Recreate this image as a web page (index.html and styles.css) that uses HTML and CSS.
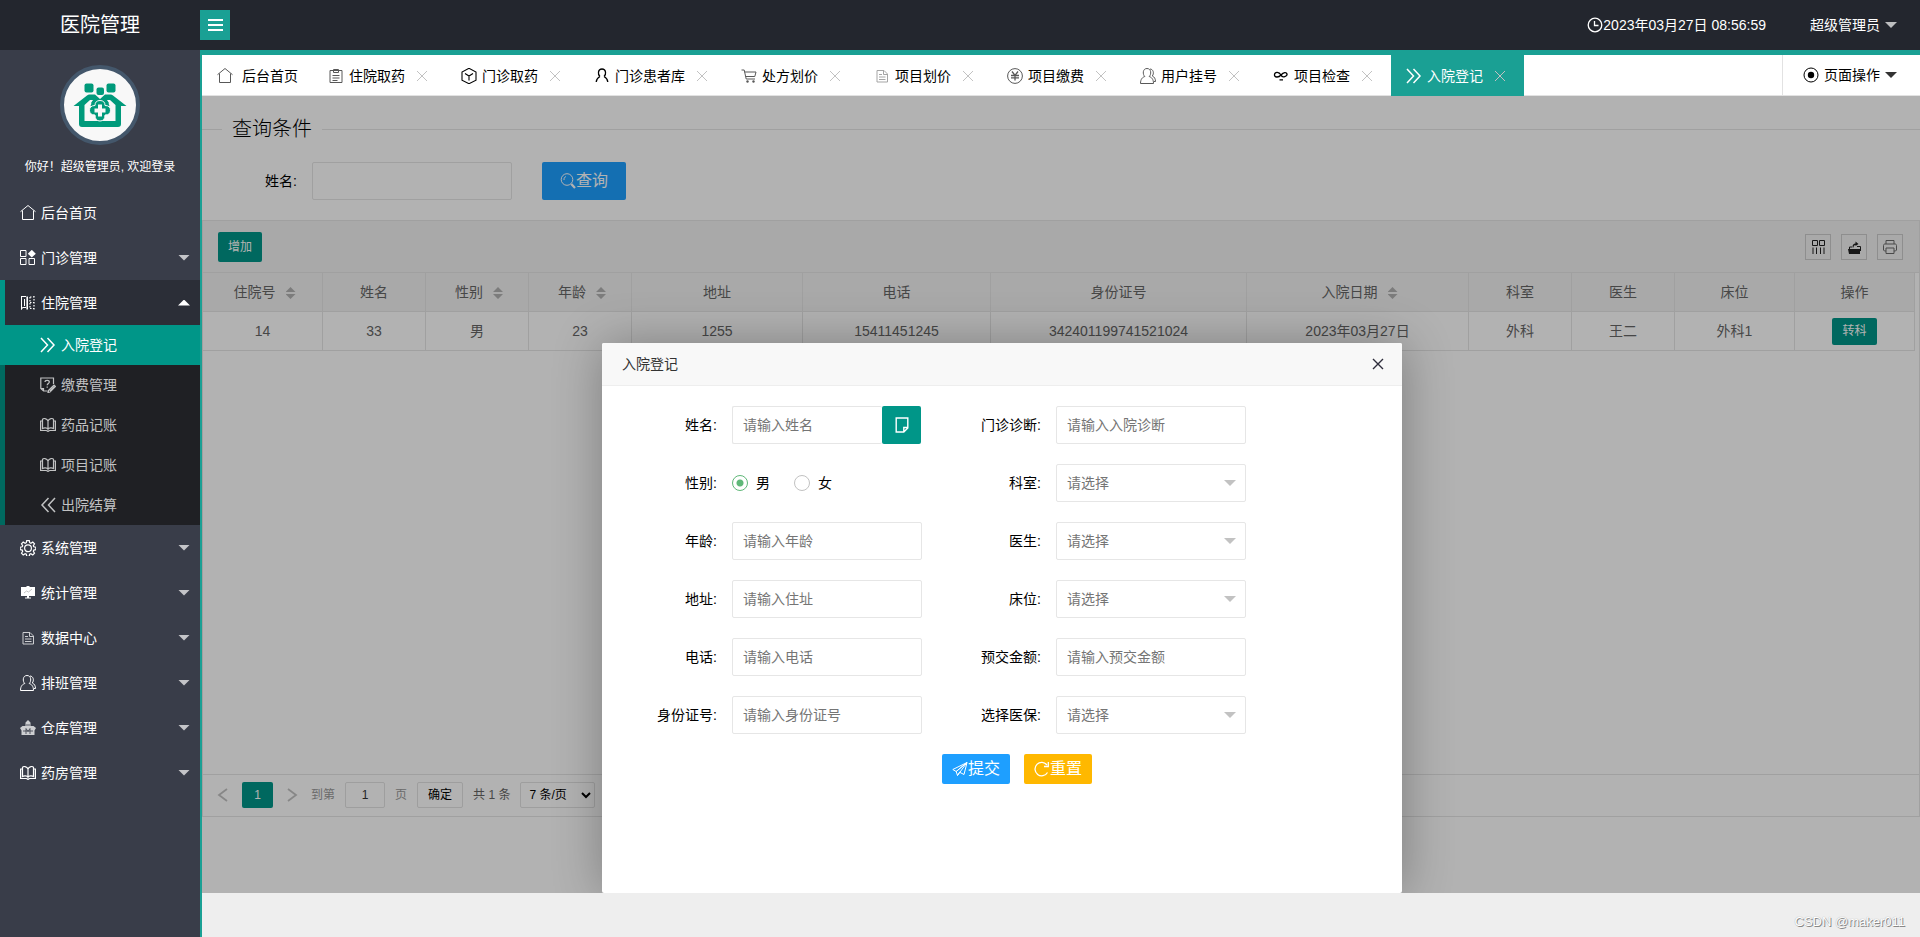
FILE: index.html
```html
<!DOCTYPE html>
<html lang="zh-CN">
<head>
<meta charset="utf-8">
<title>医院管理</title>
<link rel="stylesheet" href="styles.css">
</head>
<body>
<svg class="sprite" aria-hidden="true">
  <symbol id="i-home" viewBox="0 0 16 16"><path d="M.5 6.700 8 .5l7.500 6.200M2.500 5.500v9h11v-9"/></symbol>
  <symbol id="i-apps" viewBox="0 0 16 16"><path d="M.5.500h5.500v6H.5zM.5 8.500h5.500v6H.5zM9 8.500h5.500v6H9z"/><path class="solid" d="m11.800-.2 4 3.900-4 3.900-4-3.900z"/></symbol>
  <symbol id="i-building" viewBox="0 0 16 16"><path d="M1.500 1v13.500M1.500 1.500H6M1.500 14.500l1-2H6M4.500 4v7"/><path stroke-width="1.600" d="M7.200 1.500v13"/><path stroke-width="1.200" stroke-dasharray="1.500 1.500" d="M10 2v12M14 1v14M10 2h4M10 7.500h4M10 13.500h4"/></symbol>
  <symbol id="i-right" viewBox="0 0 16 16"><path stroke-width="1.500" d="m1 1 6.500 7L1 15M7.500 1 14 8l-6.500 7"/></symbol>
  <symbol id="i-left" viewBox="0 0 16 16"><path stroke-width="1.500" d="M8.500 1 2 8l6.500 7M15 1 8.500 8l6.500 7"/></symbol>
  <symbol id="i-quiz" viewBox="0 0 16 16"><path stroke-width="1.200" d="M13.500 7V1H.8v10.500L3.500 14h4M.8 11.500h2.700V14M5 5c0-2.200 4.300-2.200 4.300 0 0 1.500-2.100 1.500-2.100 3.300M7.200 9.600v1.200M8.500 13.500l5.500-5.500 1.500 1.500-5.500 5.500-2 .5zM10 14l4.500-4.500"/></symbol>
  <symbol id="i-book" viewBox="0 0 16 16"><path stroke-width="1.200" d="M8 4C7 1 3 1 2.500 2.500v9c1.500-1 4.500-1 5.500.7 1-1.700 4-1.700 5.500-.7v-9C13 1 9 1 8 4zv8M2.500 4H.6v9.500h5.700c.5 0 .8.800 1.700.8s1.200-.8 1.700-.8h5.700V4h-1.900"/></symbol>
  <symbol id="i-gear" viewBox="0 0 16 16"><path stroke-width="1.200" d="M6.700.6h2.600l.4 2.100 1.200.6 1.900-1.200 1.700 1.700-1.200 1.900.5 1.100 2 .4v2.400l-2 .5-.5 1.100 1.200 2-1.700 1.700-1.900-1.200-1.200.5-.4 2.200H6.700l-.4-2.200-1.200-.5-1.900 1.200-1.700-1.700 1.200-2-.5-1.100-2-.5V7.200l2-.4.5-1.100-1.200-1.900 1.700-1.700 1.900 1.200 1.200-.6z"/><circle cx="8" cy="8.300" r="3.400" stroke-width="1.200"/></symbol>
  <symbol id="i-board" viewBox="0 0 16 16"><path class="solid" d="M6.500 1h3v1H15v9H9v1.500h2v1H5v-1h2V11H1V2h5.500z"/><path stroke="#aaa" stroke-width=".7" d="m4 8 2.500-2 2 1L12 4"/></symbol>
  <symbol id="i-file" viewBox="0 0 16 16"><path d="M3 2.500h7l3.500 3.500v8H3zM9.500 2.500v4h4M5 6.500h3M5 9h6.500M5 11.500h6.500"/></symbol>
  <symbol id="i-users" viewBox="0 0 16 16"><path d="M4.800 8.500C2.500 6.500 2.500.5 7 .5s4.500 6 2.200 8c2.200.7 4.300 2.500 4.300 7H.5c0-4.500 2.100-6.300 4.300-7zM10 1c3.500.2 4.300 4.500 2.300 7 2.200 1 3.200 2.800 3.200 5.500h-1.500"/></symbol>
  <symbol id="i-depot" viewBox="0 0 16 16"><path class="solid" opacity=".75" d="M8 0 10.500 2.500V6h3L16 8l-1.500 2.500V15h-13v-4.500L0 8l2.500-2h3V2.500z"/><path stroke="#393d49" stroke-width=".8" d="M3 11h10M6 14V8.500l2 3 2-3V14M6 5h4"/></symbol>
  <symbol id="i-note" viewBox="0 0 16 16"><path d="M2 2.500h12v12H2zM5.500 4.500v-3h5v3zM4.500 7.500h7M4.500 10h7M4.500 12.500h5"/></symbol>
  <symbol id="i-cube" viewBox="0 0 16 16"><path stroke-width="1.100" d="M8 .3 15 4v8.200L8 15.700 1 12.200V4zM4 5.500 8 8l4-2.500M8 8v4.500"/></symbol>
  <symbol id="i-user" viewBox="0 0 16 16"><path d="M6 8.500C3.500 6.500 3.800 1 8 1s4.500 5.500 2 7.500M6 8.500C4 9.500 2.500 11 2.200 14M10 8.500c2 1 3.500 2.500 3.800 5.500" stroke-width="1.300"/></symbol>
  <symbol id="i-cart" viewBox="0 0 16 16"><path d="M.5 2h2.700l2 9H14M3.600 4H15l-1.200 4.500H4.600"/><circle class="solid" cx="6.500" cy="13.500" r="1.200"/><circle class="solid" cx="12.500" cy="13.500" r="1.200"/></symbol>
  <symbol id="i-yen" viewBox="0 0 16 16"><circle cx="8" cy="8" r="7.400"/><path stroke-width="1.300" d="m5 3.500 3 4 3-4M8 7.500v5M4 7.500h8M4 9.800h8"/></symbol>
  <symbol id="i-infinity" viewBox="0 0 16 16"><path stroke-width="1.300" d="M8 7C6 3.500 2 3.500 1.500 6.500S5.500 10 8 7s5.500-3 6-1-4.500 4.500-6 1M6.500 11.800h3.500"/></symbol>
  <symbol id="i-close" viewBox="0 0 16 16"><path d="m3 3 10 10M13 3 3 13"/></symbol>
  <symbol id="i-clock" viewBox="0 0 16 16"><circle cx="8" cy="8" r="6.800" stroke-width="1.300"/><path stroke-width="1.300" d="M7.500 4v4.500h4"/></symbol>
  <symbol id="i-dot" viewBox="0 0 16 16"><circle cx="8" cy="8" r="7"/><circle class="solid" cx="8" cy="8" r="3.200"/></symbol>
  <symbol id="i-search" viewBox="0 0 16 16"><circle cx="7" cy="6.500" r="5.800"/><path stroke-width="2.200" d="m11.300 11 3.700 4"/><path d="M4 7c-.2-2 .8-3 2-3.500"/></symbol>
  <symbol id="i-page" viewBox="0 0 16 16"><path stroke-width="1.400" d="M2.200 1h11.600v10L9.800 15H2.200zM13.800 10.500h-4V15"/></symbol>
  <symbol id="i-send" viewBox="0 0 16 16"><path d="M15 1.500.8 8.500l3.400 2zM15 1.500 4.200 10.500l1.300 4 9.500-13-3 12-4.500-2.300M5.500 14.500l2-3.300"/></symbol>
  <symbol id="i-refresh" viewBox="0 0 16 16"><path stroke-width="1.300" d="M13.500 11.500A6.700 6.700 0 1 1 13 4"/><path stroke-width="1.300" d="M14.300 1v4.500H10"/></symbol>
  <symbol id="i-cols" viewBox="0 0 16 16"><path d="M2.500 1.500h5v5h-5zM9.500 1.500h5v5h-5zM3 8.500v6.500M6.500 8.500v6.500M10.500 8.500v6.500M14 8.500v6.500"/></symbol>
  <symbol id="i-export" viewBox="0 0 16 16"><path class="solid" d="M2 10h12v5H3zM6.500 8.500c0-3 1-4 3-4V2.500L12.500 5 9.500 7V6c-1.500 0-1.800 1-2 2.500z"/><path d="M11 7.500h3.500V12M3.500 10V8H6"/></symbol>
  <symbol id="i-print" viewBox="0 0 16 16"><path d="M4 5V1.500h8V5M4 12H2.500L1.500 11V6.500c0-1 .5-1.500 1.500-1.500h10c1 0 1.500.5 1.500 1.500V11l-1 1H12M4 9h8v5.500H4z"/></symbol>
  <symbol id="i-prev" viewBox="0 0 16 16"><path stroke-width="1.800" d="M12 2 4 8l8 6"/></symbol>
  <symbol id="i-next" viewBox="0 0 16 16"><path stroke-width="1.800" d="m4 2 8 6-8 6"/></symbol>
</svg>

<div class="app">
  <header class="header">
    <h1 class="logo">医院管理</h1>
    <button class="toggle" type="button" aria-label="收起菜单"><span></span><span></span><span></span></button>
    <div class="clock"><svg class="icon"><use href="#i-clock"/></svg>2023年03月27日 08:56:59</div>
    <button class="account" type="button">超级管理员<i class="caret"></i></button>
  </header>

  <div class="body">
    <aside class="side">
      <div class="profile">
        <svg class="avatar" viewBox="0 0 80 80" role="img" aria-label="头像">
          <circle cx="40" cy="40" r="38" fill="#f8f8f8" stroke="#44576b" stroke-width="4"/>
          <g fill="#009a7b">
            <rect x="24.500" y="18.500" width="9" height="9" rx="2"/>
            <rect x="46.500" y="18.500" width="9" height="9" rx="2"/>
            <rect x="36.500" y="22.500" width="7.500" height="7.500" rx="2"/>
            <path d="M13.500 41 27 30.500q1-1 2.500-1H35l5 4.500 5-4.500h5.500q1.500 0 2.500 1L66.500 41H61v18q0 3-3 3H22q-3 0-3-3V41z"/>
          </g>
          <path fill="#f8f8f8" d="M24.500 40 30 35h3.500l-3 5.500L40 50l9.500-9.500-3-5.500H50l5.500 5V56h-31z"/>
          <path fill="#009a7b" d="M31 38l4-6 5 4 5-4 4 6-9 10z"/>
          <path fill="#009a7b" stroke="#f8f8f8" stroke-width="1" d="M35 40.500q0-5 5-5t5 5q5.500 0 5.500 4.800T45 50q0 6-5 6t-5-6q-5.500 0-5.500-4.700t5.500-4.800z"/>
          <path fill="#f8f8f8" d="M38 39.500h4v4h3.500v4H42v4h-4v-4h-3.500v-4H38z"/>
        </svg>
        <p>你好！超级管理员, 欢迎登录</p>
      </div>
      <nav class="nav">
        <a href="#"><svg class="icon"><use href="#i-home"/></svg>后台首页</a>
        <a href="#"><svg class="icon"><use href="#i-apps"/></svg>门诊管理<i class="caret"></i></a>
        <div class="group">
          <a class="open" href="#"><svg class="icon"><use href="#i-building"/></svg>住院管理<i class="caret up"></i></a>
          <div class="sub">
            <a class="current" href="#"><svg class="icon"><use href="#i-right"/></svg>入院登记</a>
            <a href="#"><svg class="icon"><use href="#i-quiz"/></svg>缴费管理</a>
            <a href="#"><svg class="icon"><use href="#i-book"/></svg>药品记账</a>
            <a href="#"><svg class="icon"><use href="#i-book"/></svg>项目记账</a>
            <a href="#"><svg class="icon"><use href="#i-left"/></svg>出院结算</a>
          </div>
        </div>
        <a href="#"><svg class="icon"><use href="#i-gear"/></svg>系统管理<i class="caret"></i></a>
        <a href="#"><svg class="icon"><use href="#i-board"/></svg>统计管理<i class="caret"></i></a>
        <a href="#"><svg class="icon thin"><use href="#i-file"/></svg>数据中心<i class="caret"></i></a>
        <a href="#"><svg class="icon"><use href="#i-users"/></svg>排班管理<i class="caret"></i></a>
        <a href="#"><svg class="icon"><use href="#i-depot"/></svg>仓库管理<i class="caret"></i></a>
        <a href="#"><svg class="icon"><use href="#i-book"/></svg>药房管理<i class="caret"></i></a>
      </nav>
    </aside>

    <main class="main">
      <div class="tabs">
        <a class="tab home" href="#"><svg class="icon soft"><use href="#i-home"/></svg>后台首页</a>
        <a class="tab" href="#"><svg class="icon soft"><use href="#i-note"/></svg>住院取药<svg class="x"><use href="#i-close"/></svg></a>
        <a class="tab" href="#"><svg class="icon"><use href="#i-cube"/></svg>门诊取药<svg class="x"><use href="#i-close"/></svg></a>
        <a class="tab" href="#"><svg class="icon"><use href="#i-user"/></svg>门诊患者库<svg class="x"><use href="#i-close"/></svg></a>
        <a class="tab" href="#"><svg class="icon soft"><use href="#i-cart"/></svg>处方划价<svg class="x"><use href="#i-close"/></svg></a>
        <a class="tab" href="#"><svg class="icon faint"><use href="#i-file"/></svg>项目划价<svg class="x"><use href="#i-close"/></svg></a>
        <a class="tab" href="#"><svg class="icon soft"><use href="#i-yen"/></svg>项目缴费<svg class="x"><use href="#i-close"/></svg></a>
        <a class="tab" href="#"><svg class="icon soft"><use href="#i-users"/></svg>用户挂号<svg class="x"><use href="#i-close"/></svg></a>
        <a class="tab" href="#"><svg class="icon"><use href="#i-infinity"/></svg>项目检查<svg class="x"><use href="#i-close"/></svg></a>
        <a class="tab active" href="#"><svg class="icon"><use href="#i-right"/></svg>入院登记<svg class="x"><use href="#i-close"/></svg></a>
        <button class="ops" type="button"><svg class="icon"><use href="#i-dot"/></svg>页面操作<i class="caret"></i></button>
      </div>

      <section class="frame">
        <fieldset class="query">
          <legend>查询条件</legend>
          <form class="query-row">
            <label for="q-name">姓名:</label>
            <input class="field" id="q-name" type="text">
            <button class="btn blue large" type="button"><svg class="icon"><use href="#i-search"/></svg>查询</button>
          </form>
        </fieldset>

        <div class="grid">
          <div class="toolbar">
            <button class="btn small" type="button">增加</button>
            <div class="tools">
              <button type="button" aria-label="筛选列"><svg class="icon"><use href="#i-cols"/></svg></button>
              <button type="button" aria-label="导出"><svg class="icon"><use href="#i-export"/></svg></button>
              <button type="button" aria-label="打印"><svg class="icon soft"><use href="#i-print"/></svg></button>
            </div>
          </div>
          <div class="grid-body">
            <table>
              <colgroup>
                <col class="w120"><col class="w103"><col class="w103"><col class="w103"><col class="w171"><col class="w188"><col class="w256"><col class="w222"><col class="w103"><col class="w103"><col class="w120"><col class="w120">
              </colgroup>
              <thead>
                <tr><th class="sortable">住院号<i class="sort"></i></th><th>姓名</th><th class="sortable">性别<i class="sort"></i></th><th class="sortable">年龄<i class="sort"></i></th><th>地址</th><th>电话</th><th>身份证号</th><th class="sortable">入院日期<i class="sort"></i></th><th>科室</th><th>医生</th><th>床位</th><th>操作</th></tr>
              </thead>
              <tbody>
                <tr><td>14</td><td>33</td><td>男</td><td>23</td><td>1255</td><td>15411451245</td><td>342401199741521024</td><td>2023年03月27日</td><td>外科</td><td>王二</td><td>外科1</td><td><button class="btn mini" type="button">转科</button></td></tr>
              </tbody>
            </table>
          </div>
          <div class="pager">
            <a class="arrow" href="#" aria-label="上一页"><svg class="icon"><use href="#i-prev"/></svg></a>
            <span class="page">1</span>
            <a class="arrow" href="#" aria-label="下一页"><svg class="icon"><use href="#i-next"/></svg></a>
            <label for="p-no">到第</label>
            <input id="p-no" type="text" value="1">
            <span class="unit">页</span>
            <button type="button">确定</button>
            <span class="total">共 1 条</span>
            <select aria-label="每页条数"><option>7 条/页</option></select>
          </div>
        </div>

        <div class="mask"></div>
        <div class="dialog" role="dialog" aria-labelledby="dlg-title">
          <div class="dialog-head">
            <h2 id="dlg-title">入院登记</h2>
            <button type="button" aria-label="关闭"><svg class="icon"><use href="#i-close"/></svg></button>
          </div>
          <form class="form">
            <label for="f-name">姓名:</label>
            <div class="combo"><input class="field" id="f-name" type="text" placeholder="请输入姓名"><button class="pick" type="button" aria-label="选择患者"><svg class="icon"><use href="#i-page"/></svg></button></div>
            <label for="f-diag">门诊诊断:</label>
            <input class="field" id="f-diag" type="text" placeholder="请输入入院诊断">

            <span class="label" id="sex-label">性别:</span>
            <div class="radios" role="radiogroup" aria-labelledby="sex-label">
              <label><input type="radio" name="sex" checked>男</label>
              <label><input type="radio" name="sex">女</label>
            </div>
            <label for="f-dept">科室:</label>
            <div class="pulldown"><select class="field" id="f-dept"><option>请选择</option></select></div>

            <label for="f-age">年龄:</label>
            <input class="field" id="f-age" type="text" placeholder="请输入年龄">
            <label for="f-doc">医生:</label>
            <div class="pulldown"><select class="field" id="f-doc"><option>请选择</option></select></div>

            <label for="f-addr">地址:</label>
            <input class="field" id="f-addr" type="text" placeholder="请输入住址">
            <label for="f-bed">床位:</label>
            <div class="pulldown"><select class="field" id="f-bed"><option>请选择</option></select></div>

            <label for="f-tel">电话:</label>
            <input class="field" id="f-tel" type="text" placeholder="请输入电话">
            <label for="f-pay">预交金额:</label>
            <input class="field" id="f-pay" type="text" placeholder="请输入预交金额">

            <label for="f-id">身份证号:</label>
            <input class="field" id="f-id" type="text" placeholder="请输入身份证号">
            <label for="f-ins">选择医保:</label>
            <div class="pulldown"><select class="field" id="f-ins"><option>请选择</option></select></div>

            <div class="actions">
              <button class="btn blue" type="button"><svg class="icon"><use href="#i-send"/></svg>提交</button>
              <button class="btn amber" type="button"><svg class="icon"><use href="#i-refresh"/></svg>重置</button>
            </div>
          </form>
        </div>
      </section>

      <footer class="footer">CSDN @maker011</footer>
    </main>
  </div>
</div>
</body>
</html>
```

FILE: styles.css
```css
* { box-sizing: border-box; }

body {
  margin: 0;
  font: 14px/20px "Liberation Sans", "Noto Sans CJK SC", sans-serif;
  color: #000;
}

a { color: inherit; text-decoration: none; }
h1, h2, p { margin: 0; font-weight: 400; }
button, input, select { font: inherit; color: inherit; margin: 0; }
button { border: 0; padding: 0; background: none; cursor: pointer; }

.sprite { display: none; }

.icon, .x {
  width: 16px;
  height: 16px;
  flex: none;
  fill: none;
  stroke: currentColor;
  stroke-width: 1;
}
.solid { fill: currentColor; stroke: none; }
.soft { opacity: .65; }
.thin { opacity: .75; }
.faint { opacity: .35; }

.caret {
  width: 12px;
  height: 6px;
  background: currentColor;
  clip-path: polygon(0 0, 100% 0, 50% 100%);
}
.caret.up { clip-path: polygon(50% 0, 100% 100%, 0 100%); }

.app { display: flex; flex-direction: column; min-height: 100vh; }

/* header */
.header {
  display: flex;
  align-items: center;
  height: 50px;
  background: #23262e;
  color: #fff;
}
.logo { width: 200px; text-align: center; font-size: 20px; line-height: 30px; }
.toggle {
  display: flex;
  flex-direction: column;
  align-items: center;
  justify-content: center;
  gap: 3px;
  width: 30px;
  height: 30px;
  background: #1aa094;
}
.toggle span { width: 15px; height: 2px; background: #fff; }
.clock { display: flex; align-items: center; margin-left: auto; }
.account { display: flex; align-items: center; gap: 5px; margin: 0 23px 0 44px; }
.account .caret { opacity: .7; }

.body { flex: 1; display: flex; }

/* sidebar */
.side { width: 200px; flex: none; background: #393d49; color: #fff; }
.profile { padding-top: 15px; text-align: center; font-size: 12px; }
.avatar { display: block; width: 80px; height: 80px; margin: 0 auto 12px; }
.profile p { margin-bottom: 13px; }
.nav a { display: flex; align-items: center; gap: 5px; height: 45px; padding: 0 10px 0 20px; }
.nav .caret { margin-left: auto; opacity: .7; }
.nav .caret.up { opacity: 1; }
.group { background: linear-gradient(to right, #009688 5px, #2b2e37 5px); }
.nav .sub { background: linear-gradient(to right, #00695f 5px, #1f2024 5px); color: #c1c2c3; }
.nav .sub a { height: 40px; padding-left: 40px; }
.nav .sub .current { background: #009688; color: #fff; }

/* main column */
.main {
  flex: 1;
  min-width: 0;
  display: flex;
  flex-direction: column;
  border: solid #1aa094;
  border-width: 5px 0 0 2px;
}
.tabs { display: flex; height: 41px; background: #fff; border-bottom: 1px solid #e2e2e2; }
.tab { display: flex; align-items: center; gap: 5px; height: 41px; padding: 0 15px; white-space: nowrap; }
.tab.home { gap: 9px; }
.tab .x { width: 18px; margin-left: 3px; color: #c2c2c2; }
.tab.active { background: #1aa094; color: #fff; }
.ops {
  display: flex;
  align-items: center;
  gap: 5px;
  margin-left: auto;
  padding: 0 23px 0 20px;
  border-left: 1px solid #e2e2e2;
}
.ops .caret { color: #333; }

.frame { position: relative; flex: 1; overflow: hidden; background: #fff; padding-bottom: 76px; }
.footer {
  height: 44px;
  padding: 19px 15px 0;
  background: #eee;
  color: #fff;
  text-align: right;
  font-size: 13px;
  text-shadow: 1px 1px 0 #888, 0 0 1px #999;
}

/* shared controls */
.field {
  width: 100%;
  height: 38px;
  padding: 0 10px;
  border: 1px solid #e6e6e6;
  border-radius: 2px;
  background: #fff;
}
.field::placeholder { color: #757575; }
.btn {
  display: inline-flex;
  align-items: center;
  justify-content: center;
  height: 30px;
  padding: 0 10px;
  border-radius: 2px;
  background: #009688;
  color: #fff;
  font-size: 16px;
  white-space: nowrap;
}
.btn.blue { background: #1e9fff; }
.btn.amber { background: #ffb800; }
.btn.large { height: 38px; padding: 0 18px; }
.btn.small { font-size: 12px; }
.btn.mini { height: 27px; font-size: 12px; }

/* query form */
.query { margin: 18px 0 20px; padding: 0; border: 0 solid #e6e6e6; border-top-width: 1px; }
.query legend { margin-left: 20px; padding: 0 10px; font-size: 20px; line-height: 30px; font-weight: 300; }
.query-row { display: flex; align-items: center; padding: 18px 0 0 30px; }
.query-row label { width: 80px; padding-right: 15px; text-align: right; }
.query-row .field { width: 200px; margin-right: 30px; }

/* data grid */
.grid { border: 1px solid #e6e6e6; color: #666; }
.toolbar {
  display: flex;
  align-items: center;
  justify-content: space-between;
  height: 52px;
  padding: 0 16px 0 15px;
  background: #f2f2f2;
  border-bottom: 1px solid #e6e6e6;
}
.tools { display: flex; gap: 10px; color: #222; }
.tools button { display: grid; place-items: center; width: 26px; height: 26px; border: 1px solid #ccc; }
.grid-body { min-height: 501px; padding-right: 4px; }
.grid table { width: 100%; table-layout: fixed; border-spacing: 0; }
.grid th, .grid td {
  height: 39px;
  padding: 0;
  border: solid #e6e6e6;
  border-width: 0 1px 1px 0;
  font-weight: 400;
  text-align: center;
  line-height: 20px;
}
.grid .sortable { padding-left: 4px; }
.grid thead { background: #f2f2f2; }
.w103 { width: 103px; }
.w120 { width: 120px; }
.w171 { width: 171px; }
.w188 { width: 188px; }
.w222 { width: 222px; }
.w256 { width: 256px; }
.sort {
  display: inline-block;
  width: 10px;
  height: 12px;
  margin-left: 10px;
  vertical-align: -2px;
  background: #b2b2b2;
  clip-path: polygon(50% 0, 100% 42%, 0 42%, 0 58%, 100% 58%, 50% 100%, 0 58%, 0 42%);
}

.pager {
  display: flex;
  align-items: center;
  gap: 10px;
  height: 42px;
  padding: 0 0 2px 6px;
  border-top: 1px solid #e6e6e6;
  font-size: 12px;
  color: #999;
}
.arrow { display: grid; place-items: center; width: 28px; height: 26px; color: #c2c2c2; }
.page { width: 31px; margin: 0 -5px; line-height: 26px; border-radius: 2px; background: #009688; color: #fff; text-align: center; }
.page + .arrow { margin-right: -5px; }
.pager input, .pager button, .pager select {
  height: 26px;
  border: 1px solid #e2e2e2;
  border-radius: 2px;
  background: #fff;
  color: #000;
}
.pager input { width: 40px; padding: 0; text-align: center; color: #333; }
.pager button { padding: 0 10px; }
.pager .total { color: #666; }
.pager select { width: 75px; padding: 0 4px; }

/* dialog */
.mask { position: absolute; inset: 0; background: rgba(0, 0, 0, .3); }
.dialog {
  position: absolute;
  top: 247px;
  bottom: 0;
  left: 400px;
  width: 800px;
  border-radius: 2px;
  background: #fff;
  box-shadow: 1px 1px 50px rgba(0, 0, 0, .3);
}
.dialog-head {
  display: flex;
  align-items: center;
  justify-content: space-between;
  height: 43px;
  padding: 0 16px 0 20px;
  background: #f8f8f8;
  border-bottom: 1px solid #eee;
  border-radius: 2px 2px 0 0;
}
.dialog-head h2 { font-size: 14px; line-height: 20px; color: #333; }
.dialog-head button { display: grid; color: #2e2d3c; }
.dialog-head .icon { stroke-width: 1.4; }
.form {
  display: grid;
  grid-template-columns: 130px 190px 134px 190px;
  grid-auto-rows: 38px;
  row-gap: 20px;
  align-items: center;
  padding-top: 20px;
}
.form > label, .label { padding-right: 15px; text-align: right; }
.combo { display: flex; padding-right: 1px; }
.combo .field { flex: 1; min-width: 0; border-right: 0; }
.pick { display: grid; place-items: center; width: 39px; height: 38px; background: #009688; color: #fff; border-radius: 2px; }
.pulldown { position: relative; }
.pulldown select { appearance: none; color: #757575; }
.pulldown::after {
  content: "";
  position: absolute;
  top: 16px;
  right: 10px;
  width: 12px;
  height: 6px;
  background: #c2c2c2;
  clip-path: polygon(0 0, 100% 0, 50% 100%);
  pointer-events: none;
}
.radios { display: flex; gap: 24px; }
.radios label { display: flex; align-items: center; gap: 8px; }
.radios input {
  appearance: none;
  width: 16px;
  height: 16px;
  border: 1px solid #c2c2c2;
  border-radius: 50%;
}
.radios input:checked { border-color: #5fb878; background: radial-gradient(circle, #5fb878 3px, transparent 4px); }
.actions { grid-column: 1 / -1; display: flex; gap: 14px; align-self: start; padding-left: 340px; }
```
